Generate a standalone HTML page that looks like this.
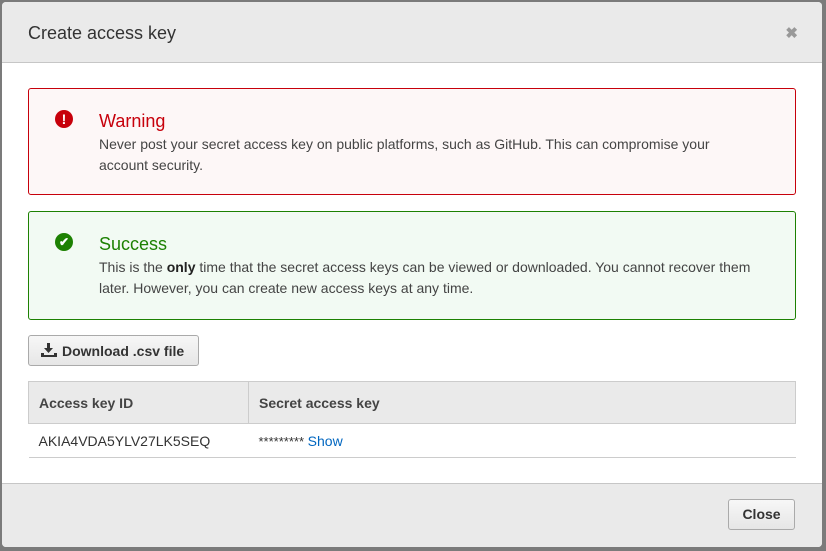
<!DOCTYPE html>
<html><head><style>
*{margin:0;padding:0;box-sizing:border-box}
body{width:826px;height:551px;background:#7b7b7b;font-family:"Liberation Sans",Arial,sans-serif;position:relative;overflow:hidden;color:#333}
.modal{position:absolute;left:2px;top:2px;width:820px;height:545px;background:#fff;border-radius:4px;overflow:hidden}
.hd{position:absolute;left:0;top:0;width:100%;height:61px;background:#eaeaea;border-bottom:1px solid #c6c6c6}
.hd h1{position:absolute;left:26px;top:21px;font-size:18px;font-weight:normal;color:#333}
.x{position:absolute;right:24px;top:22px;font-size:15px;color:#999;font-weight:bold}
.box{position:absolute;left:26px;width:768px;border-radius:3px}
.warn{top:86px;height:107px;border:1px solid #c7000b;background:#fdf7f7}
.succ{top:209px;height:109px;border:1px solid #1d8102;background:#f2faf3}
.ic{position:absolute;left:26px;top:21px;width:18px;height:18px;border-radius:50%;color:#fff;font-weight:bold;text-align:center;font-size:14px;line-height:18px}
.t{position:absolute;left:70px;top:22px;font-size:18px}
.p{position:absolute;left:70px;top:45px;font-size:14px;line-height:21px;color:#444}
.btn{position:absolute;border:1px solid #aaa;border-radius:3px;background:linear-gradient(#f7f7f7,#e6e6e6);font-weight:bold;font-size:14px;color:#333}
table{position:absolute;left:26px;top:379px;width:768px;border-collapse:collapse;font-size:14px}
th{background:#eaeaea;height:42px;text-align:left;padding-left:10px;border:1px solid #ccc;font-weight:bold;color:#444}
td{height:34px;padding-left:10px;border-bottom:1px solid #ccc;color:#333}
.ft{position:absolute;left:0;top:481px;width:100%;height:64px;background:#eaeaea;border-top:1px solid #c6c6c6}
</style></head><body>
<div class="modal">
<div class="hd"><h1>Create access key</h1><span class="x">✖</span></div>
<div class="box warn"><div class="ic" style="background:#c7000b">!</div><div class="t" style="color:#c7000b">Warning</div><div class="p" style="width:640px">Never post your secret access key on public platforms, such as GitHub. This can compromise your account security.</div></div>
<div class="box succ"><div class="ic" style="background:#1d8102;font-size:12px">✔</div><div class="t" style="color:#1d8102">Success</div><div class="p" style="width:680px">This is the <b style="color:#222">only</b> time that the secret access keys can be viewed or downloaded. You cannot recover them later. However, you can create new access keys at any time.</div></div>
<div class="btn" style="left:26px;top:333px;width:171px;height:31px;padding:7px 0 0 12px"><svg width="16" height="14" viewBox="0 0 16 14" style="vertical-align:-1px;margin-right:5px"><path d="M6 0h3v5h3l-4.5 5L3 5h3z M0 10h3v2h10v-2h3v4H0z" fill="#333"/></svg>Download .csv file</div>
<table><tr><th style="width:220px">Access key ID</th><th>Secret access key</th></tr>
<tr><td>AKIA4VDA5YLV27LK5SEQ</td><td style="font-size:13px">********* <span style="color:#0066c0;font-size:14px">Show</span></td></tr></table>
<div class="ft"></div>
<div class="btn" style="left:726px;top:497px;width:67px;height:31px;text-align:center;line-height:29px">Close</div>
</div>
</body></html>
